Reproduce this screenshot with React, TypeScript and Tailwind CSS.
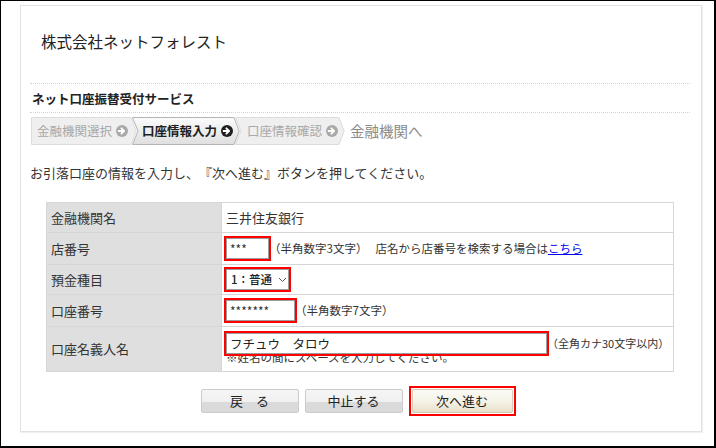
import React from "react";

const FONT = '"Noto Sans CJK JP", "Noto Sans", sans-serif';

function StepIcon({ active }: { active?: boolean }) {
  return (
    <svg width="12" height="12" viewBox="0 0 12 12" className="ml-[4px] shrink-0">
      <circle cx="6" cy="6" r="6" fill={active ? "#1f1f1f" : "#a9a9a9"} />
      <path
        d="M2.6 6h5.2M5.4 3.3 8.1 6 5.4 8.7"
        stroke="#fff"
        strokeWidth="1.9"
        fill="none"
        strokeLinecap="round"
        strokeLinejoin="round"
      />
    </svg>
  );
}

interface StepProps {
  label: string;
  width: number;
  className: string;
  notch?: boolean;
  active?: boolean;
}

function Step({ label, width, className, notch, active }: StepProps) {
  const d = 6;
  const path = `M0.5 0.5 H${width - d} L${width - 0.8} 14 L${width - d} 27.5 H0.5 ${
    notch ? `L${d} 14` : ""
  } Z`;
  return (
    <div className={`relative flex h-[28px] shrink-0 items-center ${className}`}>
      <svg
        width={width}
        height="28"
        viewBox={`0 0 ${width} 28`}
        className="absolute left-0 top-0"
      >
        <defs>
          <linearGradient id="stepActive" x1="0" y1="0" x2="0" y2="1">
            <stop offset="0" stopColor="#fbfbfb" />
            <stop offset="1" stopColor="#dfdfdf" />
          </linearGradient>
        </defs>
        <path
          d={path}
          fill={active ? "url(#stepActive)" : "#efefef"}
          stroke={active ? "#b4b4b4" : "#dcdcdc"}
          strokeLinejoin="round"
        />
      </svg>
      <span
        className={`relative text-[12.5px] leading-none ${
          active ? "font-bold text-[#1f1f1f]" : "text-[#a9a9a9]"
        }`}
      >
        {label}
      </span>
      <span className="relative">
        <StepIcon active={active} />
      </span>
    </div>
  );
}

function Label({ children }: { children: React.ReactNode }) {
  return (
    <td className="w-[175px] border border-[#d6d6d6] bg-[#dfdfdf] pl-[4px] text-[13px] text-[#333]">
      {children}
    </td>
  );
}

function Note({ children }: { children: React.ReactNode }) {
  return <span className="text-[11.5px] text-[#333]">{children}</span>;
}

function App() {
  return (
    <div
      className="h-[448px] w-[716px] overflow-hidden border-b-2 border-l border-r-2 border-t border-black bg-white pl-[19px] pt-[4px] [text-spacing-trim:space-all]"
      style={{ fontFamily: FONT }}
    >
      <div className="h-[427px] w-[682px] border border-[#e2e2e2] bg-white pl-[9px] pr-[11px] shadow-[1px_1px_1px_rgba(0,0,0,0.06)]">
        {/* 会社名 */}
        <div className="h-[78px] border-b border-dotted border-[#d4d4d4] pl-[11px] pt-[25px]">
          <div className="text-[15.5px] leading-[20px] text-[#222]">株式会社ネットフォレスト</div>
        </div>

        {/* サービス名 */}
        <div className="flex h-[29px] items-center border-b border-dotted border-[#d4d4d4] pl-[2px] pt-[2px]">
          <div className="text-[12.5px] font-bold text-[#222]">ネット口座振替受付サービス</div>
        </div>

        {/* ステップ */}
        <div className="mt-[4px] flex items-center pl-[1px]">
          <Step label="金融機関選択" width={106} className="w-[106px] pl-[6px]" />
          <Step label="口座情報入力" width={108} className="-ml-[5px] w-[108px] pl-[10px]" notch active />
          <Step label="口座情報確認" width={110} className="-ml-[5px] w-[110px] pl-[12px]" notch />
          <span className="ml-[5px] text-[14.5px] text-[#8a8a8a]">金融機関へ</span>
        </div>

        <div className="mt-[18px] text-[13px] leading-[20px] text-[#333]">
          お引落口座の情報を入力し、『次へ進む』ボタンを押してください。
        </div>

        {/* 入力フォーム */}
        <table className="ml-[16px] mt-[19px] w-[628px] border-collapse border border-[#d6d6d6]">
          <tbody>
            <tr className="h-[30px]">
              <Label>金融機関名</Label>
              <td className="border border-[#d6d6d6] pl-[4px] text-[13px] text-[#333]">三井住友銀行</td>
            </tr>
            <tr className="h-[32px]">
              <Label>店番号</Label>
              <td className="border border-[#d6d6d6] pl-[4px]">
                <div className="flex items-center">
                  <input
                    readOnly
                    value="***"
                    className="h-[21px] w-[43px] border border-[#9d9d9d] bg-white px-[3px] text-[12px] text-[#333] outline-2 outline-[#ff0000]"
                  />
                  <Note>（半角数字3文字）</Note>
                  <span className="ml-[8px] text-[11.5px] text-[#333]">店名から店番号を検索する場合は</span>
                  <a className="text-[11.5px] text-[#0000ee] underline">こちら</a>
                </div>
              </td>
            </tr>
            <tr className="h-[30px]">
              <Label>預金種目</Label>
              <td className="border border-[#d6d6d6] pl-[4px]">
                <div className="flex h-[21px] w-[63px] items-center border border-[#9d9d9d] bg-white pl-[4px] text-[11.5px] font-medium text-[#222] outline-2 outline-[#ff0000]">
                  <span>1：普通</span>
                  <svg width="9" height="6" viewBox="0 0 9 6" className="ml-[6px]">
                    <path d="M1 1l3.5 3.5L8 1" stroke="#555" strokeWidth="1" fill="none" />
                  </svg>
                </div>
              </td>
            </tr>
            <tr className="h-[32px]">
              <Label>口座番号</Label>
              <td className="border border-[#d6d6d6] pl-[4px]">
                <div className="flex items-center">
                  <input
                    readOnly
                    value="*******"
                    className="h-[21px] w-[69px] border border-[#9d9d9d] bg-white px-[3px] text-[12px] text-[#333] outline-2 outline-[#ff0000]"
                  />
                  <Note>（半角数字7文字）</Note>
                </div>
              </td>
            </tr>
            <tr className="h-[45px]">
              <Label>口座名義人名</Label>
              <td className="border border-[#d6d6d6] pl-[4px] pt-[6px] align-top">
                <div className="flex items-center">
                  <input
                    readOnly
                    value="フチュウ　タロウ"
                    className="relative z-10 h-[21px] w-[321px] border border-[#9d9d9d] bg-white px-[3px] text-[12.5px] text-[#222] outline-2 outline-[#ff0000]"
                  />
                  <span className="text-[11px] text-[#333]">（全角カナ30文字以内）</span>
                </div>
                <div className="-mt-[4px] text-[11.5px] leading-[14px] text-[#333]">
                  ※姓名の間にスペースを入力してください。
                </div>
              </td>
            </tr>
          </tbody>
        </table>

        {/* ボタン */}
        <div className="mt-[14px] flex items-center justify-center gap-[6px] pr-[4px]">
          <button className="h-[24px] w-[98px] rounded-[2px] border border-[#cbcbcb] bg-[linear-gradient(#f6f6f6_0%,#f0f0f0_55%,#dadada_56%,#dadada_100%)] text-[13px] text-[#222]">
            戻　る
          </button>
          <button className="h-[24px] w-[98px] rounded-[2px] border border-[#cbcbcb] bg-[linear-gradient(#f6f6f6_0%,#f0f0f0_55%,#dadada_56%,#dadada_100%)] text-[13px] text-[#222]">
            中止する
          </button>
          <div className="border-2 border-[#ff0000] p-[1px]">
            <button className="block h-[24px] w-[101px] rounded-[2px] border border-[#d2ccb6] bg-[linear-gradient(#fbfaf5_0%,#f5f2e6_55%,#e7e0c9_100%)] text-[13px] text-[#222]">
              次へ進む
            </button>
          </div>
        </div>
      </div>
    </div>
  );
}

export default App;
